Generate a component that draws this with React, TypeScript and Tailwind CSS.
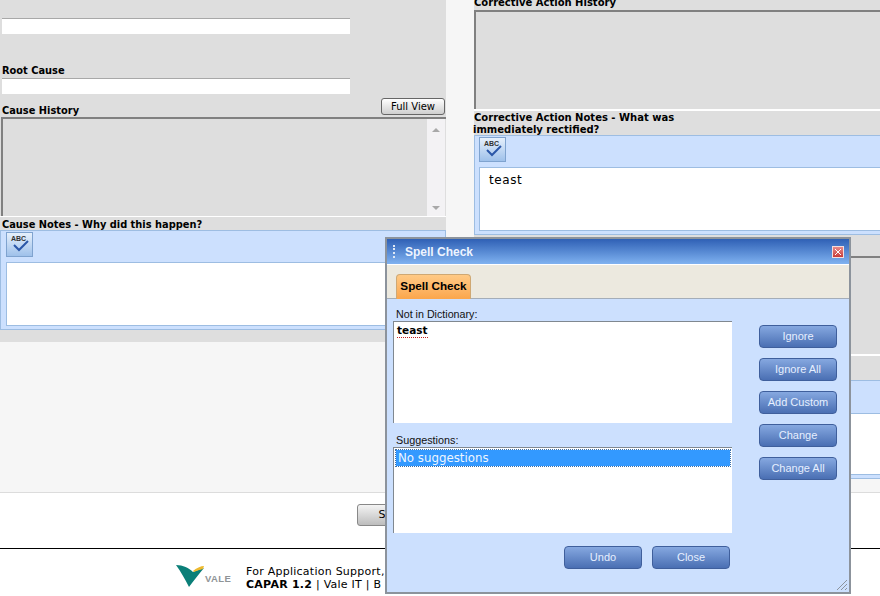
const sans = "font-['DejaVu_Sans',Verdana,sans-serif]";
const arial = "font-['Liberation_Sans',Arial,sans-serif]";

const Label = ({ children }: { children: React.ReactNode }) => (
  <p className={`${sans} text-[9.85px] leading-[12px] font-bold text-black whitespace-nowrap`}>{children}</p>
);

const WideLabel = ({ children, className = "" }: { children: React.ReactNode; className?: string }) => (
  <p className={`${sans} ${className} text-[10px] leading-[12px] font-bold text-black whitespace-nowrap`}>{children}</p>
);

const TextInput = () => (
  <div className="w-[348px] h-[16px] ml-[2px] bg-white border-t border-[#a8a8a8]" />
);

const AbcIcon = () => (
  <button className="relative block w-[27px] h-[25px] bg-gradient-to-b from-[#e6f0fc] to-[#9fc1ea] border border-[#7fa3cf]">
    <span className={`${arial} absolute left-[4px] top-[2px] text-[7px] leading-[8px] font-bold text-[#333]`}>ABC</span>
    <svg className="absolute left-[5px] top-[6px]" width="18" height="14" viewBox="0 0 18 14" fill="none">
      <path d="M2 6 L7 11 L16 2" stroke="#2b57a8" strokeWidth="2" />
    </svg>
  </button>
);

const NotesPanel = ({ text, className }: { text?: string; className: string }) => (
  <div className={`${className} h-[100px] bg-[#cce0fe] border border-[#9dbde2] pt-[1px]`}>
    <AbcIcon />
    <div className={`${sans} mt-[5px] h-[64px] bg-white border border-[#9dbde2] pl-[9px] pt-[4px] text-[12px] leading-[16px] tracking-[0.6px] text-black`}>
      {text}
    </div>
  </div>
);

const Scrollbar = () => (
  <div className="w-[18px] h-full bg-[#f3f2f4] flex flex-col items-center justify-between pt-[9px] pb-[6px]">
    <span className="w-0 h-0 border-x-[4px] border-x-transparent border-b-[4px] border-b-[#a8a8a8]" />
    <span className="w-0 h-0 border-x-[4px] border-x-transparent border-t-[4px] border-t-[#a8a8a8]" />
  </div>
);

const DialogButton = ({ label, className = "" }: { label: string; className?: string }) => (
  <button
    className={`${arial} ${className} w-[78px] h-[23px] rounded-[4px] border border-[#3f5f9c] bg-gradient-to-b from-[#86a8e0] to-[#4a6fb3] text-[11px] leading-[21px] text-[#e6efff] text-center`}
  >
    {label}
  </button>
);

const SpellCheckDialog = () => (
  <div className={`${arial} absolute left-[385px] top-[237px] w-[466px] h-[357px] border-2 border-[#8c939c] bg-[#cce0fe]`}>
    <div className="h-[26px] flex items-center bg-gradient-to-b from-[#2f60b5] to-[#80b2f0] border-b border-white">
      <div className="ml-[6px] w-[2px] h-[13px] border-l-2 border-dotted border-[#dfe8f5]" />
      <p className="ml-[10px] text-[12px] font-bold text-[#eef4ff]">Spell Check</p>
      <div className="ml-auto mr-[5px] w-[12px] h-[12px] bg-gradient-to-b from-[#e88a8a] to-[#c73a3a] border border-[#f4dede] flex items-center justify-center">
        <svg width="8" height="8" viewBox="0 0 8 8"><path d="M1 1 L7 7 M7 1 L1 7" stroke="#fff" strokeWidth="1" /></svg>
      </div>
    </div>
    <div className="h-[34px] bg-[#ece9df] border-b border-[#a4adb8] pl-[9px] pt-[9px]">
      <div className="w-[75px] h-[25px] rounded-t-[4px] border border-b-0 border-[#cfa873] bg-gradient-to-b from-[#ffca85] to-[#fba64b] text-[11.7px] leading-[22px] font-bold text-black text-center">
        Spell Check
      </div>
    </div>
    <div className="flex pl-[6px] pr-[12px] pt-[8px]">
      <div className="w-[339px] shrink-0">
        <p className="pl-[3px] text-[10.7px] leading-[14px] text-[#111]">Not in Dictionary:</p>
        <div className="h-[102px] bg-white border-t border-l border-[#808890] pl-[3px] pt-[2px]">
          <span className={`${sans} font-bold block w-fit text-[10.5px] leading-[13px] text-black border-b border-dotted border-[#c02020]`}>teast</span>
        </div>
        <p className="mt-[10px] pl-[3px] text-[10.8px] leading-[14px] text-[#111]">Suggestions:</p>
        <div className="h-[86px] bg-white border-t border-l border-[#808890] pt-[2px] pl-[2px] pr-[2px]">
          <div className={`${sans} h-[16px] bg-[#3399ff] text-[11.8px] leading-[16px] pl-[2px] text-[#eef6ff] outline-dotted outline-1 outline-[#3a6ea8]`}>
            No suggestions
          </div>
        </div>
        <div className="mt-[13px] flex justify-end gap-[10px] pr-[2px]">
          <DialogButton label="Undo" />
          <DialogButton label="Close" />
        </div>
      </div>
      <div className="ml-[27px] pt-[18px] flex flex-col gap-[10px]">
        {["Ignore", "Ignore All", "Add Custom", "Change", "Change All"].map((l) => (
          <DialogButton key={l} label={l} />
        ))}
      </div>
    </div>
    <svg className="absolute right-[1px] bottom-[1px]" width="12" height="12" viewBox="0 0 12 12" fill="none">
      <path d="M1 11 L11 1 M5 11 L11 5 M9 11 L11 9" stroke="#8c939c" strokeWidth="1" />
    </svg>
  </div>
);

const ValeLogo = () => (
  <div className="flex items-end w-[60px] h-[22px]">
    <svg width="29" height="22" viewBox="0 0 29 22" className="shrink-0">
      <path d="M0 0 C7 0 13 3 17 7 C20 6 24 4 28 3 C23 9 18 15 13 22 C9 14 5 7 0 0 Z" fill="#0b7f78" />
      <path d="M17 6 C20 3 25 1 28 1 L27 4 C23 5 20 6 18 7 Z" fill="#edb92e" />
    </svg>
    <span className={`${arial} text-[9.5px] leading-[11px] font-bold text-[#8f9497] tracking-[0.4px] mb-[3px]`}>VALE</span>
  </div>
);

export default function App() {
  return (
    <div className="relative w-[880px] h-[596px] overflow-hidden bg-white">
      <div className="flex h-[493px] bg-[#f6f6f6] border-b border-[#dcdcdc]">
        {/* left column */}
        <div className="w-[446px] shrink-0 h-[342px] bg-[#dedede]">
          <div className="pt-[18px]">
            <TextInput />
          </div>
          <div className="mt-[31px] pl-[2px]">
            <Label>Root Cause</Label>
          </div>
          <div className="mt-[1px]">
            <TextInput />
          </div>
          <div className="flex justify-between items-end h-[23px] pl-[2px] pr-[1px]">
            <Label>Cause History</Label>
            <button className={`${sans} mb-[2px] w-[64px] h-[17px] rounded-[3px] border border-[#666] bg-gradient-to-b from-white to-[#cfcfcf] text-[10px] leading-[15px] text-black`}>
              Full View
            </button>
          </div>
          <div className="flex justify-between h-[99px] ml-[1px] pr-[1px] border-t-2 border-l-2 border-[#808080]">
            <div />
            <Scrollbar />
          </div>
          <div className="h-[14px] border-t border-white pl-[2px] pt-[2px]">
            <Label>Cause Notes - Why did this happen?</Label>
          </div>
          <NotesPanel className="w-[446px] pl-[5px]" />
        </div>

        {/* right column */}
        <div className="ml-[28px] w-[420px] shrink-0 h-[482px] bg-[#dedede] -mt-[3px]">
          <WideLabel>Corrective Action History</WideLabel>
          <div className="h-[99px] mt-[1px] border-t-2 border-l-2 border-[#808080]" />
          <div className="h-[26px] border-t-2 border-white pt-[1px]">
            <WideLabel>Corrective Action Notes - What was</WideLabel>
            <WideLabel className="-ml-[1px]">immediately rectified?</WideLabel>
          </div>
          <NotesPanel text="teast" className="pl-[4px]" />
          <div className="h-[21px]" />
          <div className="h-[98px] border-t-2 border-[#808080]" />
          <div className="h-[26px] border-t-2 border-white" />
          <div className="h-[99px] bg-[#cce0fe] border border-[#9dbde2] pt-[32px] pl-[5px]">
            <div className="h-[62px] bg-white border border-[#9dbde2]" />
          </div>
        </div>
      </div>

      {/* submit row */}
      <div className="h-[56px] pt-[7px] pl-[357px] border-b border-black">
        <button className={`${sans} w-[70px] h-[22px] rounded-[3px] border border-[#888] bg-gradient-to-b from-[#f4f4f4] to-[#bdbdbd] text-[11px] text-black text-center`}>
          Save
        </button>
      </div>

      {/* footer */}
      <div className="flex pl-[176px] pt-[16px]">
        <ValeLogo />
        <div className={`${sans} ml-[10px] text-[11px] leading-[13px] tracking-[0.25px] text-black whitespace-nowrap`}>
          <p>For Application Support,</p>
          <p>
            <b>CAPAR 1.2</b> | Vale IT | B
          </p>
        </div>
      </div>

      <SpellCheckDialog />
    </div>
  );
}
